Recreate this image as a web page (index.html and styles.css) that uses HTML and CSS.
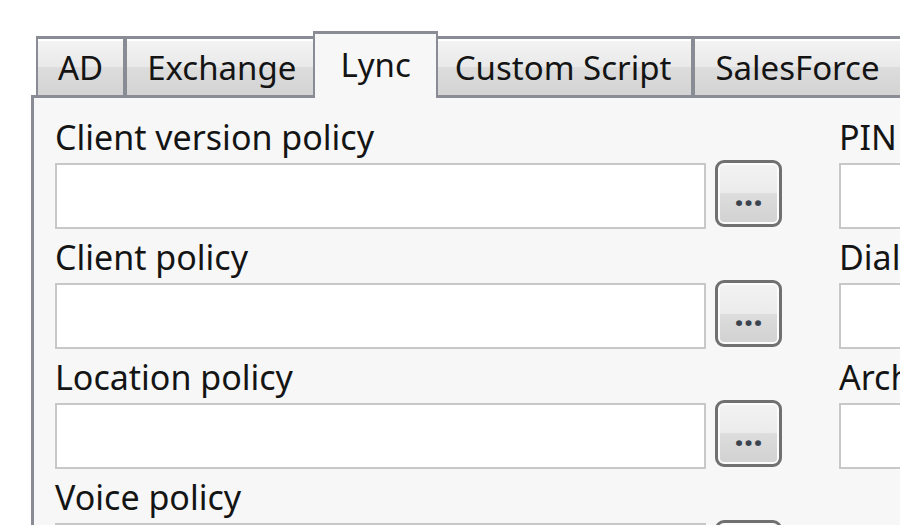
FILE: index.html
```html
<!DOCTYPE html>
<html lang="en">
<head>
    <meta charset="UTF-8">
    <title>User settings - Lync</title>
    <link rel="stylesheet" href="styles.css">
</head>
<body>

<div class="tabs">
    <div class="tab">AD</div>
    <div class="tab">Exchange</div>
    <div class="tab tab-active">Lync</div>
    <div class="tab">Custom Script</div>
    <div class="tab">SalesForce</div>
</div>

<div class="panel">
    <div class="column column-main">
        <div class="field">
            <label>Client version policy</label>
            <div class="field-row">
                <input type="text" class="textbox">
                <button class="browse">...</button>
            </div>
        </div>
        <div class="field">
            <label>Client policy</label>
            <div class="field-row">
                <input type="text" class="textbox">
                <button class="browse">...</button>
            </div>
        </div>
        <div class="field">
            <label>Location policy</label>
            <div class="field-row">
                <input type="text" class="textbox">
                <button class="browse">...</button>
            </div>
        </div>
        <div class="field">
            <label>Voice policy</label>
            <div class="field-row">
                <input type="text" class="textbox">
                <button class="browse">...</button>
            </div>
        </div>
    </div>

    <div class="column column-side">
        <div class="field">
            <label>PIN policy</label>
            <input type="text" class="textbox">
        </div>
        <div class="field">
            <label>Dial plan</label>
            <input type="text" class="textbox">
        </div>
        <div class="field">
            <label>Archiving policy</label>
            <input type="text" class="textbox">
        </div>
    </div>
</div>

</body>
</html>
```

FILE: styles.css
```css
html, body {
    height: 100%;
}

body {
    margin: 0;
    background-color: #ffffff;
    font-family: "Noto Sans", "Open Sans", sans-serif;
    color: #141414;
    overflow: hidden;
}

.tabs {
    display: flex;
    align-items: flex-end;
    margin-top: 31px;
    padding-left: 36px;
    white-space: nowrap;
}

.tab {
    flex: none;
    height: 59px;
    box-sizing: border-box;
    padding: 1px 20px 0 20px;
    border: 3px solid #898c95;
    border-width: 3px 2px 0 2px;
    background: linear-gradient(#f4f4f4, #e9e9e9 50%, #dddddd 50%, #d3d3d3);
    box-shadow: inset 0 2px 0 #ffffff;
    font-size: 33px;
    line-height: 56px;
}

.tab-active {
    position: relative;
    z-index: 1;
    height: 67px;
    margin: 0 -5px -3px -5px;
    padding: 1px 25px 4px 25px;
    background: #f7f7f7;
    box-shadow: none;
    line-height: 59px;
}

.panel {
    display: flex;
    gap: 57px;
    width: 900px;
    height: 520px;
    margin-left: 31px;
    padding: 11px 0 0 21px;
    border-top: 3px solid #898c95;
    border-left: 3px solid #898c95;
    background-color: #f7f7f7;
}

.column-main {
    width: 727px;
    flex: none;
}

.column-side {
    flex: 1;
    white-space: nowrap;
}

.field label {
    display: block;
    padding-top: 3px;
    font-size: 34px;
    line-height: 51px;
}

.field-row {
    display: flex;
    align-items: flex-start;
    gap: 9px;
}

.textbox {
    display: block;
    box-sizing: border-box;
    width: 651px;
    height: 66px;
    margin: 0;
    border: 2px solid #c8c8c8;
    background-color: #ffffff;
    font-family: inherit;
    font-size: 34px;
}

.column-side .textbox {
    width: 300px;
}

.browse {
    flex: none;
    width: 67px;
    height: 67px;
    margin-top: -3px;
    padding: 0;
    border: 3px solid #707070;
    border-radius: 9px;
    background: linear-gradient(#f3f3f3, #ebebeb 50%, #dddddd 50%, #d1d1d1);
    box-shadow: inset 0 0 0 2px #fbfbfb;
    font-family: "Noto Sans", "Open Sans", sans-serif;
    font-size: 34px;
    font-weight: bold;
    line-height: 61px;
    color: #3c4450;
    cursor: pointer;
}
```
